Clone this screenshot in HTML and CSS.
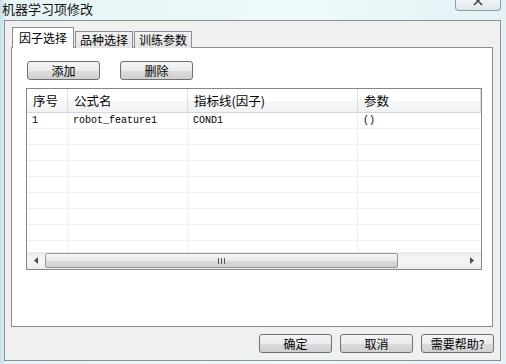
FILE: index.html
```html
<!DOCTYPE html>
<html lang="zh-CN">
<head>
    <meta charset="UTF-8">
    <title>机器学习项修改</title>
    <link rel="stylesheet" href="styles.css">
</head>
<body>
    <div class="titlebar">
        <div class="title">机器学习项修改</div>
        <div class="close">
            <svg width="14" height="8" viewBox="0 0 14 8"><path d="M3 -3 L7 1 L11 -3 M3 5 L7 1 L11 5" stroke="#3c4650" stroke-width="1.6" fill="none"/></svg>
        </div>
    </div>

    <div class="dialog">
        <div class="tabs">
            <div class="tab active">因子选择</div>
            <div class="tab">品种选择</div>
            <div class="tab">训练参数</div>
        </div>
        <div class="panel">
            <div class="toolbar">
                <button class="btn">添加</button>
                <button class="btn">删除</button>
            </div>
            <div class="list">
                <div class="row head">
                    <div class="cell">序号</div>
                    <div class="cell">公式名</div>
                    <div class="cell">指标线(因子)</div>
                    <div class="cell">参数</div>
                </div>
                <div class="body">
                    <div class="row">
                        <div class="cell mono">1</div>
                        <div class="cell mono">robot_feature1</div>
                        <div class="cell mono">COND1</div>
                        <div class="cell mono">()</div>
                    </div>
                    <div class="row"><div class="cell"></div><div class="cell"></div><div class="cell"></div><div class="cell"></div></div>
                    <div class="row"><div class="cell"></div><div class="cell"></div><div class="cell"></div><div class="cell"></div></div>
                    <div class="row"><div class="cell"></div><div class="cell"></div><div class="cell"></div><div class="cell"></div></div>
                    <div class="row"><div class="cell"></div><div class="cell"></div><div class="cell"></div><div class="cell"></div></div>
                    <div class="row"><div class="cell"></div><div class="cell"></div><div class="cell"></div><div class="cell"></div></div>
                    <div class="row"><div class="cell"></div><div class="cell"></div><div class="cell"></div><div class="cell"></div></div>
                    <div class="row"><div class="cell"></div><div class="cell"></div><div class="cell"></div><div class="cell"></div></div>
                    <div class="row"><div class="cell"></div><div class="cell"></div><div class="cell"></div><div class="cell"></div></div>
                </div>
                <div class="hscroll">
                    <div class="arrow">
                        <svg width="4" height="7" viewBox="0 0 4 7"><path d="M4 0 L0 3.5 L4 7 Z" fill="#4d4d4d"/></svg>
                    </div>
                    <div class="thumb">
                        <svg width="7" height="6" viewBox="0 0 7 6"><path d="M0.5 0 V6 M3.5 0 V6 M6.5 0 V6" stroke="#555" stroke-width="1"/></svg>
                    </div>
                    <div class="track"></div>
                    <div class="arrow">
                        <svg width="4" height="7" viewBox="0 0 4 7"><path d="M0 0 L4 3.5 L0 7 Z" fill="#4d4d4d"/></svg>
                    </div>
                </div>
            </div>
        </div>
        <div class="footer">
            <button class="btn">确定</button>
            <button class="btn">取消</button>
            <button class="btn">需要帮助?</button>
        </div>
    </div>
</body>
</html>
```

FILE: styles.css
```css
body {
    margin: 0;
    width: 506px;
    height: 364px;
    overflow: hidden;
    font-family: "Noto Sans CJK SC", "Noto Sans", sans-serif;
    font-size: 12px;
    color: #000;
    background: linear-gradient(90deg, #c9e0ea 0, #d6eaf1 4px, #e6f4f7 5px, #eefafb 60%, #e3f2f6 100%);
}
.titlebar {
    height: 20px;
    display: flex;
    justify-content: space-between;
    align-items: flex-start;
}
.title {
    margin: 1px 0 0 2px;
    font-size: 13px;
    line-height: 15px;
    color: #111;
}
.close {
    width: 44px;
    height: 10px;
    margin-right: 5px;
    border: 1px solid #8c9aa4;
    border-top: none;
    border-radius: 0 0 4px 4px;
    background: linear-gradient(#eef3f6, #dfe7ec);
    display: flex;
    justify-content: center;
    align-items: flex-start;
}
.dialog {
    box-sizing: border-box;
    width: 497px;
    height: 341px;
    margin-left: 4px;
    border: 1px solid #8e8f8f;
    background: #f0f0f0;
    padding: 6px 0 0 6px;
}
.tabs {
    display: flex;
    align-items: flex-end;
    height: 21px;
    margin: 0 0 -1px 1px;
}
.tab {
    box-sizing: border-box;
    height: 17px;
    padding: 0 4px;
    border: 1px solid #898c95;
    border-bottom: none;
    background: linear-gradient(#f2f2f2, #e3e3e3);
    line-height: 15px;
    margin-left: 1px;
    white-space: nowrap;
}
.tab.active {
    position: relative;
    height: 21px;
    margin-left: 0;
    background: #fff;
    line-height: 19px;
    padding: 0 6px;
}
.panel {
    box-sizing: border-box;
    width: 482px;
    height: 280px;
    border: 1px solid #898c95;
    background: #fff;
    padding: 13px 0 0 14px;
}
.toolbar {
    display: flex;
    gap: 20px;
    margin-left: 1px;
}
.btn {
    box-sizing: border-box;
    width: 73px;
    height: 19px;
    padding: 0;
    border: 1px solid #707070;
    border-radius: 3px;
    background: linear-gradient(#f4f4f4 0, #ebebeb 50%, #dcdcdc 51%, #d0d0d0 100%);
    font-family: inherit;
    font-size: 12px;
    line-height: 16px;
    color: #000;
}
.list {
    box-sizing: border-box;
    width: 456px;
    height: 182px;
    margin-top: 8px;
    border: 1px solid #828790;
    background: #fff;
    display: flex;
    flex-direction: column;
}
.row {
    display: grid;
    grid-template-columns: 41px 120px 170px 1fr;
    height: 16px;
    border-bottom: 1px solid #f0f0f0;
    box-sizing: border-box;
}
.row .cell {
    border-right: 1px solid #f0f0f0;
    padding-left: 5px;
    line-height: 15px;
    white-space: nowrap;
    overflow: hidden;
}
.row .cell:last-child {
    border-right: none;
}
.row.head {
    height: 24px;
    border-bottom: 1px solid #d5d5d5;
    background: linear-gradient(#fff 0, #fff 50%, #f7f8f9 51%, #f1f2f4 100%);
}
.row.head .cell {
    padding-left: 6px;
    line-height: 23px;
    border-right: 1px solid #dcdde0;
    font-size: 12.5px;
}
.mono {
    font-family: "Liberation Mono", monospace;
    font-size: 10px;
}
.body {
    height: 139px;
    overflow: hidden;
}
.hscroll {
    height: 17px;
    display: flex;
    background: linear-gradient(#e9e9e9, #f4f4f4 30%, #f4f4f4 70%, #ebebeb);
}
.arrow {
    width: 18px;
    display: flex;
    align-items: center;
    justify-content: center;
}
.thumb {
    box-sizing: border-box;
    width: 353px;
    height: 15px;
    margin-top: 1px;
    border: 1px solid #979797;
    border-radius: 2px;
    background: linear-gradient(#f6f6f6 0, #e9e9e9 50%, #dadada 51%, #cfcfcf 100%);
    display: flex;
    align-items: center;
    justify-content: center;
}
.track {
    flex: 1;
}
.footer {
    display: flex;
    justify-content: flex-end;
    gap: 8px;
    padding: 7px 6px 0 0;
}
```
